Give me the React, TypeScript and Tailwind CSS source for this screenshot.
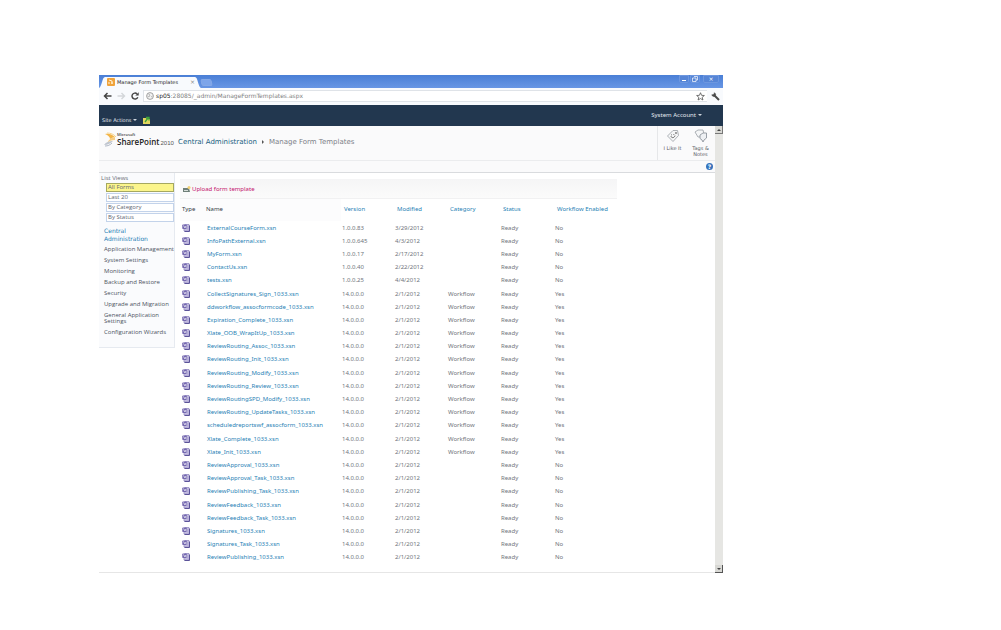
import React from "react";

type Form = { name: string; version: string; modified: string; workflow: boolean };

const builtIn = (name: string, workflow: boolean): Form => ({
  name,
  version: "14.0.0.0",
  modified: "2/1/2012",
  workflow,
});

const forms: Form[] = [
  { name: "ExternalCourseForm.xsn", version: "1.0.0.83", modified: "3/29/2012", workflow: false },
  { name: "InfoPathExternal.xsn", version: "1.0.0.645", modified: "4/3/2012", workflow: false },
  { name: "MyForm.xsn", version: "1.0.0.17", modified: "2/17/2012", workflow: false },
  { name: "ContactUs.xsn", version: "1.0.0.40", modified: "2/22/2012", workflow: false },
  { name: "tests.xsn", version: "1.0.0.25", modified: "4/4/2012", workflow: false },
  builtIn("CollectSignatures_Sign_1033.xsn", true),
  builtIn("ddworkflow_assocformcode_1033.xsn", true),
  builtIn("Expiration_Complete_1033.xsn", true),
  builtIn("Xlate_OOB_WrapItUp_1033.xsn", true),
  builtIn("ReviewRouting_Assoc_1033.xsn", true),
  builtIn("ReviewRouting_Init_1033.xsn", true),
  builtIn("ReviewRouting_Modify_1033.xsn", true),
  builtIn("ReviewRouting_Review_1033.xsn", true),
  builtIn("ReviewRoutingSPD_Modify_1033.xsn", true),
  builtIn("ReviewRouting_UpdateTasks_1033.xsn", true),
  builtIn("scheduledreportswf_assocform_1033.xsn", true),
  builtIn("Xlate_Complete_1033.xsn", true),
  builtIn("Xlate_Init_1033.xsn", true),
  builtIn("ReviewApproval_1033.xsn", false),
  builtIn("ReviewApproval_Task_1033.xsn", false),
  builtIn("ReviewPublishing_Task_1033.xsn", false),
  builtIn("ReviewFeedback_1033.xsn", false),
  builtIn("ReviewFeedback_Task_1033.xsn", false),
  builtIn("Signatures_1033.xsn", false),
  builtIn("Signatures_Task_1033.xsn", false),
  builtIn("ReviewPublishing_1033.xsn", false),
];

const views = ["All Forms", "Last 20", "By Category", "By Status"];

const adminLinks = [
  "Application Management",
  "System Settings",
  "Monitoring",
  "Backup and Restore",
  "Security",
  "Upgrade and Migration",
  "General Application\nSettings",
  "Configuration Wizards",
];

const sortable = ["Version", "Modified", "Category", "Status", "Workflow Enabled"];

function FormIcon() {
  return (
    <svg viewBox="0 0 16 16" className="block size-2" aria-hidden="true">
      <path d="M5 1h9v13H4v-4" fill="#d6d0ec" stroke="#8f86bd" strokeWidth="1.5" />
      <rect x="0.5" y="1" width="9" height="9" rx="1.500" fill="#7569b0" />
      <path d="M3 3l3 5 1-3 2 1" fill="none" stroke="#fff" strokeWidth="1.4" />
      <path d="M11 3v8M5 12h6" stroke="#9a92c6" strokeWidth="1.2" />
      <path d="M15 3v12H5" fill="none" stroke="#4d4490" strokeWidth="1.8" />
    </svg>
  );
}

function SharePointMark() {
  return (
    <svg viewBox="0 0 13 15" className="h-[15px] w-[13px] shrink-0" aria-hidden="true">
      <path d="M1 2c3-1 7 0 10 3-2 0-3 1-5 2C6 5 4 3 1 2z" fill="#f3b548" />
      <path d="M3 1c3 0 7 1 9 4" fill="none" stroke="#f7d58e" strokeWidth="1" />
      <path d="M11 5c-3 0-6 2-8 6 2-2 5-3 8-3z" fill="#f5cd85" />
      <path d="M0 13c2-3 5-4 9-4-2 2-5 4-9 4z" fill="#bfc5cf" />
      <path d="M1 14c3 0 5-1 7-3" fill="none" stroke="#9ba5b5" strokeWidth="0.8" />
    </svg>
  );
}

function TabStrip() {
  return (
    <div className="flex h-[13px] items-end justify-between bg-linear-to-b from-[#4a7fd6] to-[#6896e4]">
      <div className="flex h-full items-end">
        <div className="relative flex h-3 w-[102px] items-center pl-2">
          <svg viewBox="0 0 102 12" preserveAspectRatio="none" className="absolute inset-0 size-full" aria-hidden="true">
            <path d="M0 12C3 11 3 1 6 1h90c3 0 3 10 6 11z" fill="#f8fafd" />
          </svg>
          <svg viewBox="0 0 8 8" className="relative size-2" aria-hidden="true">
            <rect width="8" height="8" rx="1" fill="#f0a33a" />
            <path d="M2 2l3 1v3M2 4v2M4 5h2" stroke="#fff3d8" fill="none" />
          </svg>
          <span className="relative ml-0.5 flex-1 whitespace-nowrap text-[5px] leading-[8px] text-[#222]">Manage Form Templates</span>
          <button aria-label="Close tab" className="relative mr-[6px] text-[6px] leading-[8px] text-[#888]">×</button>
        </div>
        <button aria-label="New tab" className="mb-0.5 h-[7px] w-[11px] skew-x-12 rounded-[2px] border border-[#86a9e6] bg-[#7da5ea]" />
      </div>
      <div className="mr-1 flex h-full items-start gap-px">
        <button aria-label="Minimize" className="flex h-2 w-[10px] items-end justify-center rounded-b-[2px] border border-[#6d97df] bg-[#5685d6] pb-px">
          <span className="h-px w-1 bg-white" />
        </button>
        <button aria-label="Restore" className="mr-0.5 flex h-2 w-[10px] items-center justify-center rounded-b-[2px] border border-[#6d97df] bg-[#5685d6]">
          <svg viewBox="0 0 6 6" className="size-[6px]" aria-hidden="true">
            <path d="M2 .5h3.500v3.500H4M.5 2H4v3.500H.5z" fill="none" stroke="#fff" strokeWidth="0.7" />
          </svg>
        </button>
        <button aria-label="Close" className="flex h-2 w-[16px] items-center justify-center rounded-b-[2px] border border-[#6d97df] bg-[#5685d6] text-[6px] leading-[6px] text-white">×</button>
      </div>
    </div>
  );
}

function AddressBar() {
  return (
    <div className="flex h-[17px] items-center bg-[#f8fafd] pb-px pl-1">
      <button aria-label="Back" className="mr-[5px]">
        <svg viewBox="0 0 9 8" className="h-2 w-[9px]" aria-hidden="true">
          <path d="M8.500 4H1.500M4.500 1L1.500 4l3 3" fill="none" stroke="#444" strokeWidth="1.500" />
        </svg>
      </button>
      <button aria-label="Forward" className="mr-[5px]">
        <svg viewBox="0 0 9 8" className="h-2 w-[9px]" aria-hidden="true">
          <path d="M.5 4h7M4.500 1l3 3-3 3" fill="none" stroke="#d3d6da" strokeWidth="1.400" />
        </svg>
      </button>
      <button aria-label="Reload" className="mr-1">
        <svg viewBox="0 0 8 8" className="size-2" aria-hidden="true">
          <path d="M6.800 5.200A3 3 0 1 1 6 1.800" fill="none" stroke="#444" strokeWidth="1.400" />
          <path d="M7.700.2v3.400H4.300z" fill="#444" />
        </svg>
      </button>
      <div className="flex h-3 flex-1 items-center border-y border-l border-[#dfe3e8] bg-white pl-[2px] text-[6px] leading-[10px]">
        <svg viewBox="0 0 8 8" className="mr-0.5 size-2 shrink-0" aria-hidden="true">
          <circle cx="4" cy="4" r="3.400" fill="#f3f3f3" stroke="#8d8d8d" strokeWidth="0.8" />
          <path d="M2 1.500L4 3 3 5 1.500 4M5 5l1.500-1" fill="none" stroke="#aaa" strokeWidth="0.8" />
        </svg>
        <label htmlFor="address" className="text-[#222]">sp05</label>
        <input
          id="address"
          readOnly
          value=":28085/_admin/ManageFormTemplates.aspx"
          className="block h-[10px] min-w-0 flex-1 bg-transparent text-[#808080] outline-none"
        />
      </div>
      <button aria-label="Bookmark" className="flex h-3 items-center border-y border-[#dfe3e8] bg-white px-0.5">
        <svg viewBox="0 0 10 10" className="size-[9px]" aria-hidden="true">
          <path d="M5 .8l1.200 2.900 3.100.2-2.400 2 .8 3L5 7.300 2.300 8.900l.8-3-2.400-2 3.100-.2z" fill="#fff" stroke="#555" strokeWidth="0.9" />
        </svg>
      </button>
      <button aria-label="Settings" className="ml-1 mr-[3px]">
        <svg viewBox="0 0 9 9" className="size-[9px]" aria-hidden="true">
          <path d="M3 3l5 5" stroke="#4a4a4a" strokeWidth="2" />
          <path d="M.8 2.800A2 2 0 0 0 4 4 2.200 2.200 0 0 0 3.400.7L3 2.300 2 2.800z" fill="#4a4a4a" stroke="#4a4a4a" strokeWidth="0.600" />
        </svg>
      </button>
    </div>
  );
}

function Ribbon() {
  return (
    <div className="flex h-[21px] justify-between bg-[#22374f] text-[#e4e9ef]">
      <div className="flex items-end gap-[6px] pb-0.5 pl-[3px]">
        <button className="flex items-center gap-0.5 text-[5px] leading-[8px]">
          Site Actions <span className="border-x-2 border-t-2 border-x-transparent border-t-[#cdd5de]" />
        </button>
        <button aria-label="Navigate up">
          <svg viewBox="0 0 8 8" className="size-2" aria-hidden="true">
            <path d="M0 2h3l1 1h3v5H0z" fill="#e2d65c" />
            <path d="M2 6l3-4M3 1.500h3v3" fill="none" stroke="#3fa33c" strokeWidth="1.300" />
          </svg>
        </button>
      </div>
      <button className="mb-0.5 flex items-center gap-0.5 self-center pr-[21px] font-['Noto_Sans',sans-serif] text-[6px] leading-[8px]">
        System Account <span className="border-x-2 border-t-2 border-x-transparent border-t-[#cdd5de]" />
      </button>
    </div>
  );
}

function TitleBar() {
  return (
    <header className="flex h-[35px] border-b border-[#ebecee] bg-[#fafafb]">
      <div className="flex flex-1 items-start whitespace-nowrap pl-[5px] pt-[6px]">
        <SharePointMark />
        <div className="flex w-[61px] flex-col font-['Open_Sans',sans-serif]">
          <span className="text-[4px] leading-[5px] font-semibold text-[#444]">Microsoft</span>
          <span className="flex items-baseline gap-px text-[8px] leading-[9px] font-semibold text-[#222]">
            SharePoint
            <span className="font-['Liberation_Sans',sans-serif] text-[6px] font-normal text-[#555]">2010</span>
          </span>
        </div>
        <h1 className="flex items-center gap-[5px] pt-[5px] text-[7px] leading-[10px] text-[#7c8088]">
          <a href="#central" className="text-[#20607f]">Central Administration</a>
          <span className="border-y-2 border-l-2 border-y-transparent border-l-[#555]" />
          <span>Manage Form Templates</span>
        </h1>
      </div>
      <div className="flex border-l border-[#e6e7e9] pr-px pt-[3px] text-center text-[5px] leading-[6px] text-[#5a6068]">
        <button className="flex w-[29px] flex-col items-center">
          <svg viewBox="0 0 14 14" className="size-[14px]" aria-hidden="true">
            <path d="M1.500 7L7 1.500h4.500l1 5L7 12.500z" fill="#f5f6f7" stroke="#a4a8ae" strokeWidth="0.900" />
            <circle cx="10" cy="4" r="0.900" fill="#777" />
            <path d="M4.800 7.200c1 2 3.400 2 4.200-.6M5.500 5.500v.8M7.800 5v.8" fill="none" stroke="#555" strokeWidth="0.900" />
          </svg>
          <span className="mt-0.5">I Like It</span>
        </button>
        <button className="flex w-[27px] flex-col items-center">
          <svg viewBox="0 0 14 14" className="size-[14px]" aria-hidden="true">
            <path d="M1 3l3-2h5l1 4-3 3H4z" fill="#f5f6f7" stroke="#a4a8ae" strokeWidth="0.900" />
            <path d="M6 6l3-2h3.500v5L10 11l-1 2-1-2-2-1.500z" fill="#eef0f3" stroke="#8f959d" strokeWidth="0.900" />
          </svg>
          <span className="mt-0.5">Tags &amp;<br />Notes</span>
        </button>
      </div>
    </header>
  );
}

function Sidebar() {
  return (
    <aside className="w-[76px] shrink-0 self-start border-r border-b border-[#e6eaf0] bg-[#fafbfd] pb-3 font-['Open_Sans',sans-serif]">
      <h2 className="pl-[2px] pt-px text-[6px] leading-[9px] text-[#686c74]">List Views</h2>
      <ul className="ml-[7px] flex flex-col gap-px text-[6px] leading-[7px] text-[#5d6673]">
        {views.map((v, i) => (
          <li key={v}>
            <a
              href="#view"
              className={
                i === 0
                  ? "block border border-[#a5a861] bg-[#fbf58c] pl-px"
                  : "block border border-[#c3d3ea] bg-white pl-px"
              }
            >
              {v}
            </a>
          </li>
        ))}
      </ul>
      <nav className="pl-[5px]">
        <h2 className="pt-[5px] font-['DejaVu_Sans',sans-serif] text-[6px] leading-[8px] text-[#1f7fb5]">
          <a href="#central">Central<br />Administration</a>
        </h2>
        <ul className="flex flex-col gap-[5px] pt-[3px] text-[6px] leading-[6px] text-[#4c535d]">
          {adminLinks.map((l) => (
            <li key={l}>
              <a href="#admin" className="block whitespace-pre">{l}</a>
            </li>
          ))}
        </ul>
      </nav>
    </aside>
  );
}

function FormsTable() {
  return (
    <table className="h-[365px] w-full table-fixed border-collapse text-left font-['Noto_Sans',sans-serif] text-[6px] leading-[8px] text-[#70757c]">
      <colgroup>
        <col className="w-[26px]" />
        <col />
        <col className="w-[53px]" />
        <col className="w-[53px]" />
        <col className="w-[53px]" />
        <col className="w-[54px]" />
        <col className="w-[63px]" />
      </colgroup>
      <thead>
        <tr className="h-[22px] text-[#1f7fb5]">
          <th className="bg-[#fcfcfd] p-0 pb-0.5 pl-0.5 font-normal text-[#333b46]">Type</th>
          <th className="bg-[#fcfcfd] p-0 pb-0.5 font-normal text-[#333b46]">Name</th>
          {sortable.map((h) => (
            <th key={h} className="whitespace-nowrap p-0 pb-0.5 pl-[3px] font-normal">
              <a href="#sort">{h}</a>
            </th>
          ))}
        </tr>
      </thead>
      <tbody>
        {forms.map((f) => (
          <tr key={f.name} className="h-[13px]">
            <td className="p-0 pl-0.5"><FormIcon /></td>
            <td className="whitespace-nowrap p-0 pl-px">
              <a href="#form" className="text-[#1f7fb5]">{f.name}</a>
            </td>
            <td className="p-0 pl-px">{f.version}</td>
            <td className="p-0 pl-px">{f.modified}</td>
            <td className="p-0 pl-px">{f.workflow ? "Workflow" : ""}</td>
            <td className="p-0 pl-px">Ready</td>
            <td className="p-0 pl-px">{f.workflow ? "Yes" : "No"}</td>
          </tr>
        ))}
      </tbody>
    </table>
  );
}

function ScrollBar() {
  return (
    <div className="flex w-2 shrink-0 flex-col justify-between bg-[#e6e6e3]">
      <button aria-label="Scroll up" className="flex h-2 items-center justify-center border-r border-b border-[#777] bg-[#d8d8d4]">
        <span className="border-x-2 border-b-2 border-x-transparent border-b-[#444]" />
      </button>
      <button aria-label="Scroll down" className="flex h-2 items-center justify-center border-r border-b border-[#555] bg-[#d8d8d4]">
        <span className="border-x-2 border-t-2 border-x-transparent border-t-[#444]" />
      </button>
    </div>
  );
}

export default function App() {
  return (
    <div className="min-h-screen bg-white pt-[75px] pr-[278px] pb-14 pl-[99px] font-['DejaVu_Sans',sans-serif]">
      <TabStrip />
      <AddressBar />
      <Ribbon />
      <div className="flex">
        <div className="min-w-0 flex-1 border-b border-[#e6e6e6]">
          <TitleBar />
          <div className="flex h-3 items-center justify-end border-b border-[#d9dbde] bg-[#fafafb] pr-[2px]">
            <button aria-label="Help" className="flex size-[7px] items-center justify-center rounded-full bg-[#3573bd] text-[6px] leading-[7px] font-bold text-white">?</button>
          </div>
          <div className="flex">
            <Sidebar />
            <main className="mr-[98px] ml-[5px] min-w-0 flex-1 pt-[6px] pb-2">
              <div className="flex h-[20px] items-center border-b border-[#f1f1f2] bg-linear-to-b from-[#f5f5f6] to-[#fbfbfb] pl-[3px]">
                <a href="#upload" className="flex items-center gap-px font-['Noto_Sans',sans-serif] text-[6px] leading-[8px] text-[#c4126e]">
                  <svg viewBox="0 0 8 8" className="size-2" aria-hidden="true">
                    <path d="M0 3h6l1 4H0z" fill="#6f7f78" />
                    <path d="M1 5.500h4" stroke="#d5ddd8" />
                    <circle cx="6" cy="2.500" r="1.500" fill="#f0cf72" />
                  </svg>
                  Upload form template
                </a>
              </div>
              <FormsTable />
            </main>
          </div>
        </div>
        <ScrollBar />
      </div>
    </div>
  );
}
